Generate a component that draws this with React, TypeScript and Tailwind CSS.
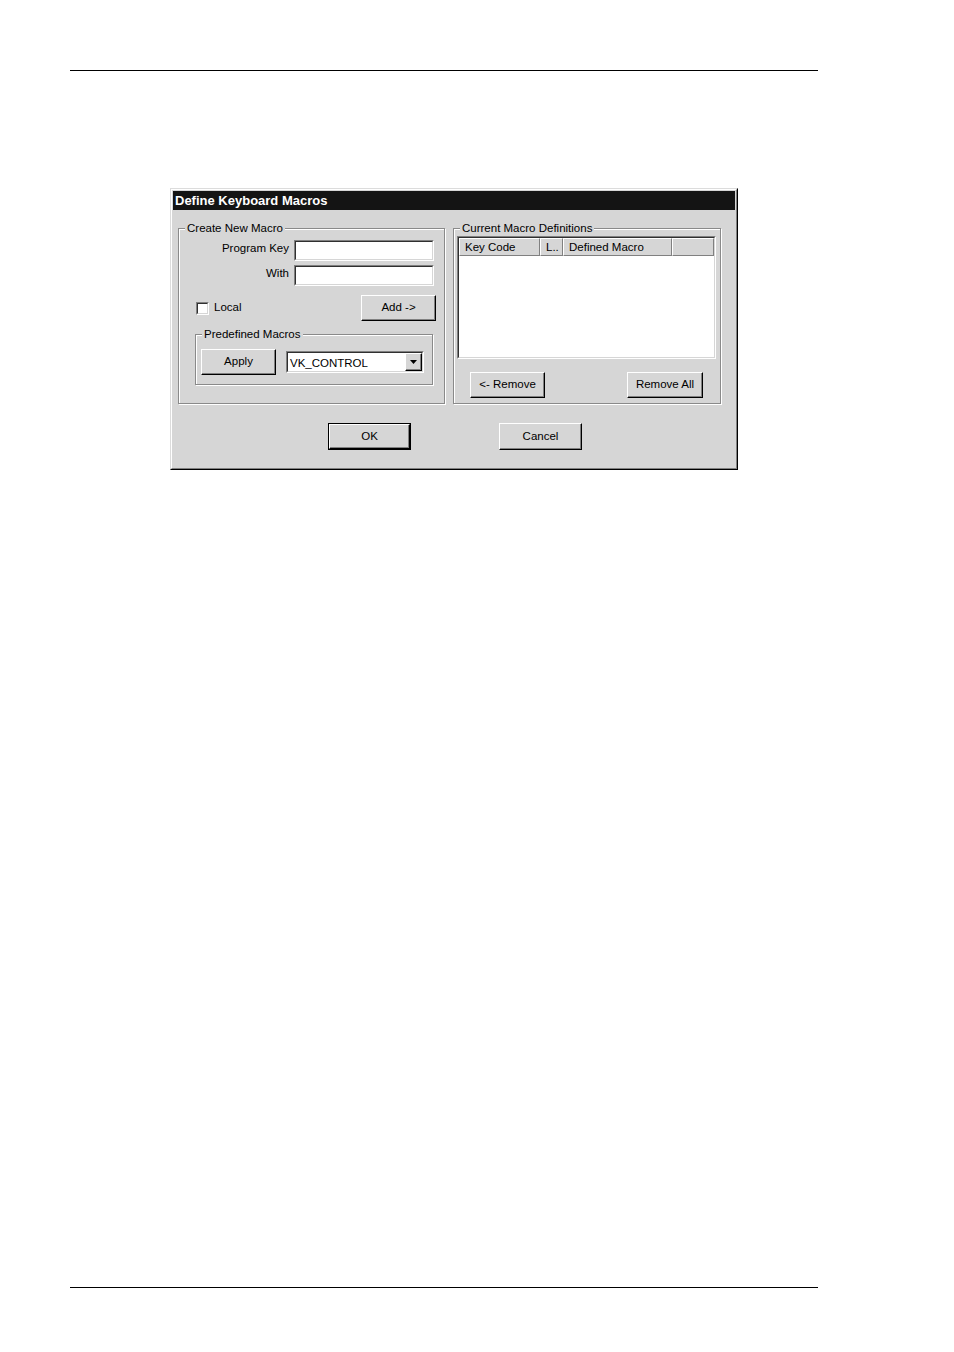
import React from "react";

const face = "bg-[#d6d6d6]";

function Button({
  label,
  className = "",
  isDefault = false,
}: {
  label: string;
  className?: string;
  isDefault?: boolean;
}) {
  const inner = (
    <div className="flex h-full w-full items-center justify-center border border-t-white border-l-white border-r-black border-b-black shadow-[inset_-1px_-1px_0_#808080]">
      <span className="text-[11.5px] leading-none text-black">{label}</span>
    </div>
  );
  if (isDefault) {
    return <div className={`${className} ${face} border border-black`}>{inner}</div>;
  }
  return <div className={`${className} ${face}`}>{inner}</div>;
}

function Sunken({ className = "", children }: { className?: string; children?: React.ReactNode }) {
  return (
    <div
      className={`${className} border border-t-[#808080] border-l-[#808080] border-r-white border-b-white`}
    >
      <div className="h-full w-full border border-t-[#303030] border-l-[#303030] border-r-[#d6d6d6] border-b-[#d6d6d6] bg-white">
        {children}
      </div>
    </div>
  );
}

function Group({
  title,
  className = "",
  children,
}: {
  title: string;
  className?: string;
  children?: React.ReactNode;
}) {
  return (
    <div
      className={`${className} relative border border-[#8a8a8a] shadow-[inset_1px_1px_0_#fff,1px_1px_0_#fff]`}
    >
      <span
        className={`absolute -top-[8px] left-[6px] ${face} px-[2px] text-[11.5px] leading-[14px] text-black`}
      >
        {title}
      </span>
      {children}
    </div>
  );
}

function HeaderCell({ label, className = "" }: { label: string; className?: string }) {
  return (
    <div
      className={`${className} flex h-full items-center border border-t-white border-l-white border-r-[#808080] border-b-[#808080] pl-[5px] pt-[2px] text-[11.5px] leading-none text-black`}
    >
      {label}
    </div>
  );
}

export default function App() {
  return (
    <div className="flex h-[1352px] w-[954px] flex-col bg-white font-['Liberation_Sans',Arial,sans-serif]">
      <div className="ml-[70px] mt-[70px] h-px w-[748px] bg-black" />

      {/* dialog */}
      <div
        className={`ml-[170px] mt-[117px] h-[282px] w-[568px] ${face} border border-t-[#dcdcdc] border-l-[#dcdcdc] border-r-black border-b-black`}
      >
        <div className="flex h-full flex-col border border-t-white border-l-white border-r-[#808080] border-b-[#808080] p-px">
          <div className="flex h-[19px] items-center bg-[#141414] pl-[2px]">
            <span className="text-[13px] font-bold leading-none text-white">Define Keyboard Macros</span>
          </div>

          <div className="ml-[5px] mt-[18px] flex gap-[8px]">
            <Group title="Create New Macro" className="h-[176px] w-[267px]">
              <div className="flex flex-col pt-[11px]">
                <div className="flex items-center">
                  <span className="mb-[3px] w-[110px] text-right text-[11.5px] leading-none text-black">Program Key</span>
                  <Sunken className="ml-[5px] h-[21px] w-[140px]" />
                </div>
                <div className="mt-[4px] flex items-center">
                  <span className="mb-[3px] w-[110px] text-right text-[11.5px] leading-none text-black">With</span>
                  <Sunken className="ml-[5px] h-[21px] w-[140px]" />
                </div>
                <div className="mt-[9px] flex items-center">
                  <Sunken className="ml-[17px] h-[13px] w-[13px]" />
                  <span className="ml-[5px] text-[11.5px] leading-none text-black">Local</span>
                  <Button label="Add ->" className="ml-auto mr-[8px] h-[26px] w-[75px]" />
                </div>
                <Group title="Predefined Macros" className="ml-[16px] mt-[13px] h-[51px] w-[238px]">
                  <div className="flex items-center pl-[5px] pt-[14px]">
                    <Button label="Apply" className="h-[26px] w-[75px]" />
                    <Sunken className="ml-[10px] h-[22px] w-[138px]">
                      <div className="flex h-full items-center">
                        <span className="flex-1 pl-[2px] pt-[3px] text-[11.5px] leading-none text-black">VK_CONTROL</span>
                        <div className={`flex h-full w-[17px] items-center justify-center ${face} border border-t-white border-l-white border-r-black border-b-black shadow-[inset_-1px_-1px_0_#808080]`}>
                          <svg width="7" height="4" viewBox="0 0 7 4">
                            <path d="M0 0h7L3.5 4z" fill="#000" />
                          </svg>
                        </div>
                      </div>
                    </Sunken>
                  </div>
                </Group>
              </div>
            </Group>

            <Group title="Current Macro Definitions" className="h-[176px] w-[268px]">
              <div className="flex flex-col pt-[7px]">
                <Sunken className="ml-[3px] h-[123px] w-[259px]">
                  <div className={`flex h-[18px] ${face}`}>
                    <HeaderCell label="Key Code" className="w-[81px]" />
                    <HeaderCell label="L.." className="w-[23px]" />
                    <HeaderCell label="Defined Macro" className="w-[109px]" />
                    <HeaderCell label="" className="flex-1" />
                  </div>
                </Sunken>
                <div className="mt-[13px] flex">
                  <Button label="<- Remove" className="ml-[16px] h-[26px] w-[75px]" />
                  <Button label="Remove All" className="ml-auto mr-[17px] h-[26px] w-[76px]" />
                </div>
              </div>
            </Group>
          </div>

          <div className="mt-[19px] flex">
            <Button label="OK" isDefault className="ml-[155px] h-[27px] w-[83px]" />
            <Button label="Cancel" className="ml-[88px] h-[27px] w-[83px]" />
          </div>
        </div>
      </div>

      <div className="mb-[64px] ml-[70px] mt-auto h-px w-[748px] bg-black" />
    </div>
  );
}
